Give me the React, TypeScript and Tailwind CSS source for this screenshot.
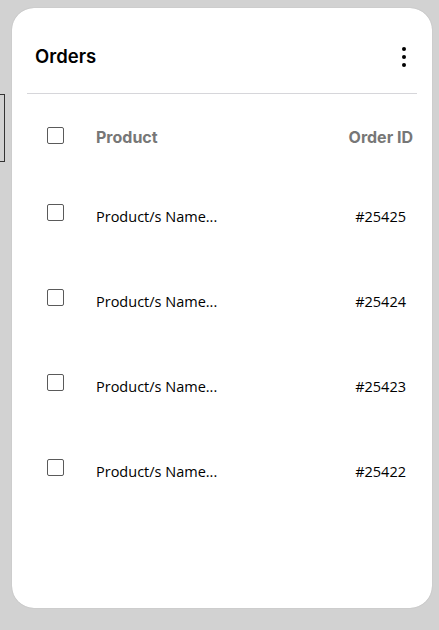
import React from 'react';

const orders = ['#25425', '#25424', '#25423', '#25422'];

const Checkbox: React.FC = () => (
    <div className="w-[17px] h-[17px] shrink-0 rounded-[2px] border-[1.5px] border-[#5a5a5a] bg-white"></div>
);

const App: React.FC = () => {
    return (
        <div className="relative w-full h-[630px] bg-[#d2d2d2] pt-[8px] pl-[12px] overflow-hidden">
            {/* element behind, mostly off screen */}
            <div className="absolute left-[-40px] top-[94px] w-[45px] h-[68px] border-[1.5px] border-[#333]"></div>

            <div className="w-[420px] h-[600px] bg-white rounded-[22px] shadow-[0_0_1px_rgba(0,0,0,0.25)] flex flex-col">
                <div className="flex items-center justify-between pl-[23px] pr-[26px] pt-[36px] h-[60px]">
                    <h2 className="text-[18.5px] leading-[26px] font-semibold text-black" style={{ fontFamily: 'Inter, sans-serif' }}>
                        Orders
                    </h2>
                    <div className="flex flex-col gap-[3.5px] pt-[2px]">
                        <span className="w-[4.5px] h-[4.5px] rounded-full bg-black"></span>
                        <span className="w-[4.5px] h-[4.5px] rounded-full bg-black"></span>
                        <span className="w-[4.5px] h-[4.5px] rounded-full bg-black"></span>
                    </div>
                </div>

                <div className="mx-[15px] mt-[25px] h-px bg-[#d6d6da]"></div>

                <div className="flex items-center h-[17px] mt-[33px] pl-[35px] pr-[19px]">
                    <Checkbox />
                    <span className="ml-[32px] text-[16px] font-bold text-[#777] pt-[3px]" style={{ fontFamily: 'Inter, sans-serif' }}>
                        Product
                    </span>
                    <span className="ml-auto text-[16px] font-bold text-[#777] pt-[3px]" style={{ fontFamily: 'Inter, sans-serif' }}>
                        Order ID
                    </span>
                </div>

                {orders.map((id, i) => (
                    <div
                        key={id}
                        className={`flex items-center h-[17px] pl-[35px] pr-[26px] ${i === 0 ? 'mt-[60px]' : 'mt-[68px]'}`}
                    >
                        <Checkbox />
                        <span className="ml-[32px] text-[14.5px] font-medium text-black pt-[8px]" style={{ fontFamily: '"Open Sans", sans-serif' }}>
                            Product/s Name...
                        </span>
                        <span className="ml-auto text-[14.5px] font-medium text-black pt-[8px]" style={{ fontFamily: '"Open Sans", sans-serif' }}>
                            {id}
                        </span>
                    </div>
                ))}
            </div>
        </div>
    );
};

export default App;
